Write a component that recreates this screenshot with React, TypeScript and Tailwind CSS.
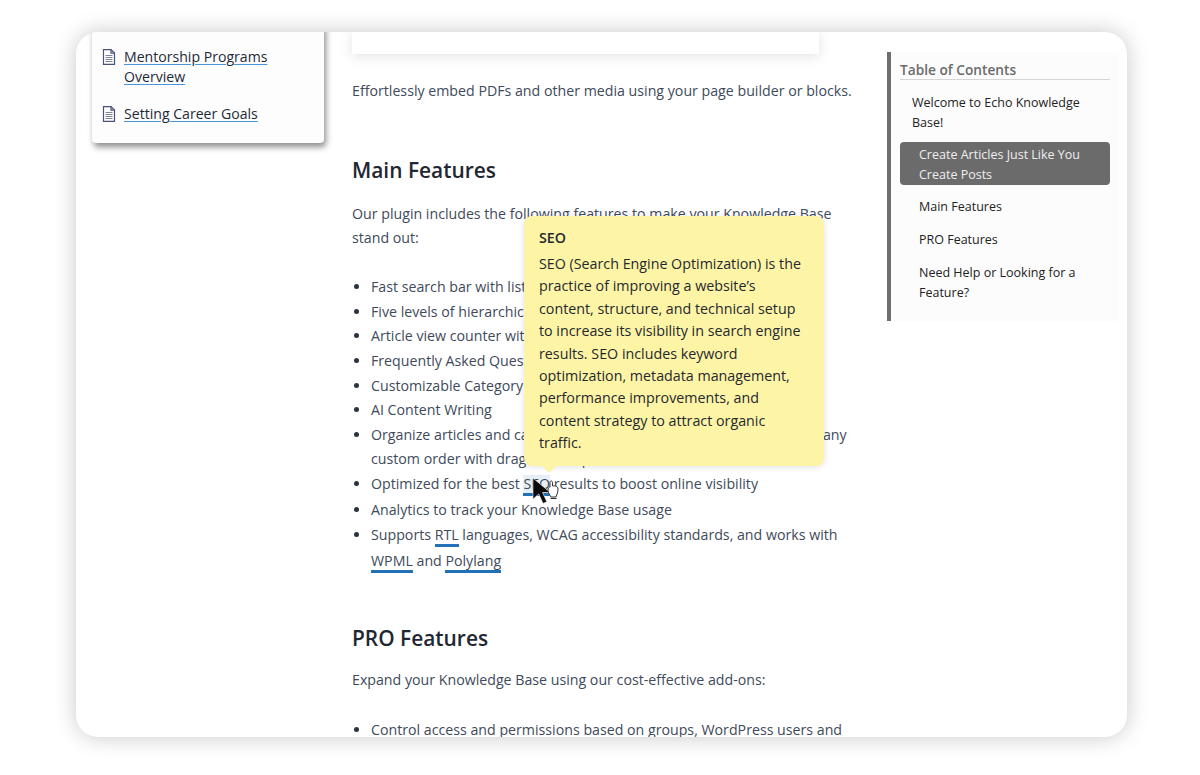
const tocItems = [
  { label: "Main Features" },
  { label: "PRO Features" },
  { label: "Need Help or Looking for a Feature?" },
];

function DocIcon() {
  return (
    <svg viewBox="0 0 14 16" className="mt-[2px] h-4 w-[14px] shrink-0" fill="none" stroke="#4b4f7c" strokeWidth="1.2">
      <path d="M1.500.6h7.500l3.500 3.500v11.300h-11z" fill="#fff" />
      <path d="M9 .6v3.500h3.500" />
      <path d="M3.500 6.500h7M3.500 8.500h7M3.500 10.500h7M3.500 12.500h7" stroke="#7f829e" strokeWidth="1" />
    </svg>
  );
}

function Term({ children, active }: { children: React.ReactNode; active?: boolean }) {
  return (
    <span className={`mb-[2px] inline-block border-b-[3px] border-[#2270b8] leading-[18px] ${active ? "bg-[#e6eff8]" : ""}`}>
      {children}
    </span>
  );
}

function Cursor() {
  return (
    <div className="absolute left-[532px] top-[477px] z-20 flex items-start">
      <svg viewBox="0 0 24 30" className="h-[29px] w-[23px]">
        <path d="M1 1v22l6-5.500 4.500 10 4-1.800-4.500-9.700h8z" fill="#0b0b0b" stroke="#fff" strokeWidth="0.6" />
      </svg>
      <svg viewBox="0 0 12 20" className="ml-[-8px] mt-[3px] h-5 w-3" fill="#fff" stroke="#333" strokeWidth="1">
        <path d="M4 17c-1-2-3-4-3-7 0-2 1-3 2-3V2.500c0-2 2.500-2 2.500 0V6c2-.5 5.500 0 5.500 3 0 3-1 5-2 8z" />
        <path d="M3.500 18.500h6" />
      </svg>
    </div>
  );
}

export default function App() {
  return (
    <div className="relative h-[775px] w-[1200px] overflow-hidden bg-white pt-8 pl-[76px] font-['Open_Sans','Noto_Sans',sans-serif]">
      <div className="flex h-[705px] w-[1051px] overflow-hidden rounded-[22px] bg-white shadow-[0_0_22px_rgba(0,0,0,0.22)]">
        {/* left nav */}
        <aside className="ml-4 w-[232px] shrink-0">
          <div className="-mt-2 h-[119px] rounded-b-[4px] bg-[#fdfdfd] pl-[10px] pt-[23px] pr-4 shadow-[2px_4px_6px_rgba(0,0,0,0.45)]">
            <div className="flex gap-[8px]">
              <DocIcon />
              <a className="text-[14.100px] leading-[20px] text-[#1e2a38] underline decoration-[#4a94dc] underline-offset-2">
                Mentorship Programs Overview
              </a>
            </div>
            <div className="mt-[17px] flex gap-[8px]">
              <DocIcon />
              <a className="text-[14.100px] leading-[20px] text-[#1e2a38] underline decoration-[#4a94dc] underline-offset-2">
                Setting Career Goals
              </a>
            </div>
          </div>
        </aside>

        {/* article */}
        <main className="ml-7 w-[503px] shrink-0 text-[14.200px] leading-[24.600px] text-[#404a5a]">
          <div className="h-[22px] w-[467px] bg-white shadow-[0_2px_14px_rgba(0,0,0,0.12)]" />
          <p className="mt-[25px]">Effortlessly embed PDFs and other media using your page builder or blocks.</p>
          <h2 className="mt-[51px] text-[20.900px] font-semibold leading-[30px] text-[#1f2733]">Main Features</h2>
          <p className="mt-[17px]">Our plugin includes the following features to make your Knowledge Base stand out:</p>
          <ul className="mt-[24.500px] list-disc pl-[19px] marker:text-[#2a3340]">
            <li>Fast search bar with listed results</li>
            <li>Five levels of hierarchical documentation</li>
            <li>Article view counter with popular articles</li>
            <li>Frequently Asked Questions</li>
            <li>Customizable Category pages</li>
            <li>AI Content Writing</li>
            <li>Organize articles and categories alphabetically, by date, author or in any custom order with drag and drop</li>
            <li>Optimized for the best <Term active>SEO</Term> results to boost online visibility</li>
            <li>Analytics to track your Knowledge Base usage</li>
            <li>Supports <Term>RTL</Term> languages, WCAG accessibility standards, and works with <Term>WPML</Term> and <Term>Polylang</Term></li>
          </ul>
          <h2 className="mt-[48px] text-[20.900px] font-semibold leading-[30px] text-[#1f2733]">PRO Features</h2>
          <p className="mt-[15px]">Expand your Knowledge Base using our cost-effective add-ons:</p>
          <ul className="mt-[26px] list-disc pl-[19px] marker:text-[#2a3340]">
            <li>Control access and permissions based on groups, WordPress users and</li>
          </ul>
        </main>

        {/* table of contents */}
        <aside className="ml-[32px] mt-[20px] h-[269px] w-[232px] shrink-0 border-l-4 border-[#6e6e6e] bg-[#fcfcfc] pl-[9px]">
          <div className="mr-[9px]">
            <div className="mt-[8px] border-b border-[#d6d6d6] text-[13.700px] font-semibold leading-[19px] text-[#6b6b6b]">
              Table of Contents
            </div>
            <div className="mt-[13px] pl-[12px] text-[12.500px] leading-[19.500px] text-[#222]">Welcome to Echo Knowledge Base!</div>
            <div className="mb-[-1.500px] mt-[10px] rounded-[4px] bg-[#6b6b6b] pb-[1px] pl-[19px] pr-2 pt-[3px] text-[12.500px] leading-[19.500px] text-[#efefef]">
              Create Articles Just Like You Create Posts
            </div>
            {tocItems.map((item) => (
              <div key={item.label} className="mt-[13.500px] pl-[19px] text-[12.500px] leading-[19.500px] text-[#222]">
                {item.label}
              </div>
            ))}
          </div>
        </aside>
      </div>

      {/* glossary tooltip */}
      <div className="absolute left-[524px] top-[216px] z-10 h-[250px] w-[300px] rounded-[8px] bg-[#fef4a6] px-[15px] pt-[11px] text-[14.280px] leading-[22.400px] text-[#23282f] shadow-[0_1px_6px_rgba(0,0,0,0.12)]">
        <div className="font-semibold">SEO</div>
        <p className="mt-[3.500px]">
          SEO (Search Engine Optimization) is the practice of improving a website’s content, structure, and technical setup to increase its visibility in search engine results. SEO includes keyword optimization, metadata management, performance improvements, and content strategy to attract organic traffic.
        </p>
        <div className="absolute left-[18px] top-full h-0 w-0 border-x-[7px] border-t-[7px] border-x-transparent border-t-[#fef4a6]" />
      </div>
      <Cursor />
    </div>
  );
}
